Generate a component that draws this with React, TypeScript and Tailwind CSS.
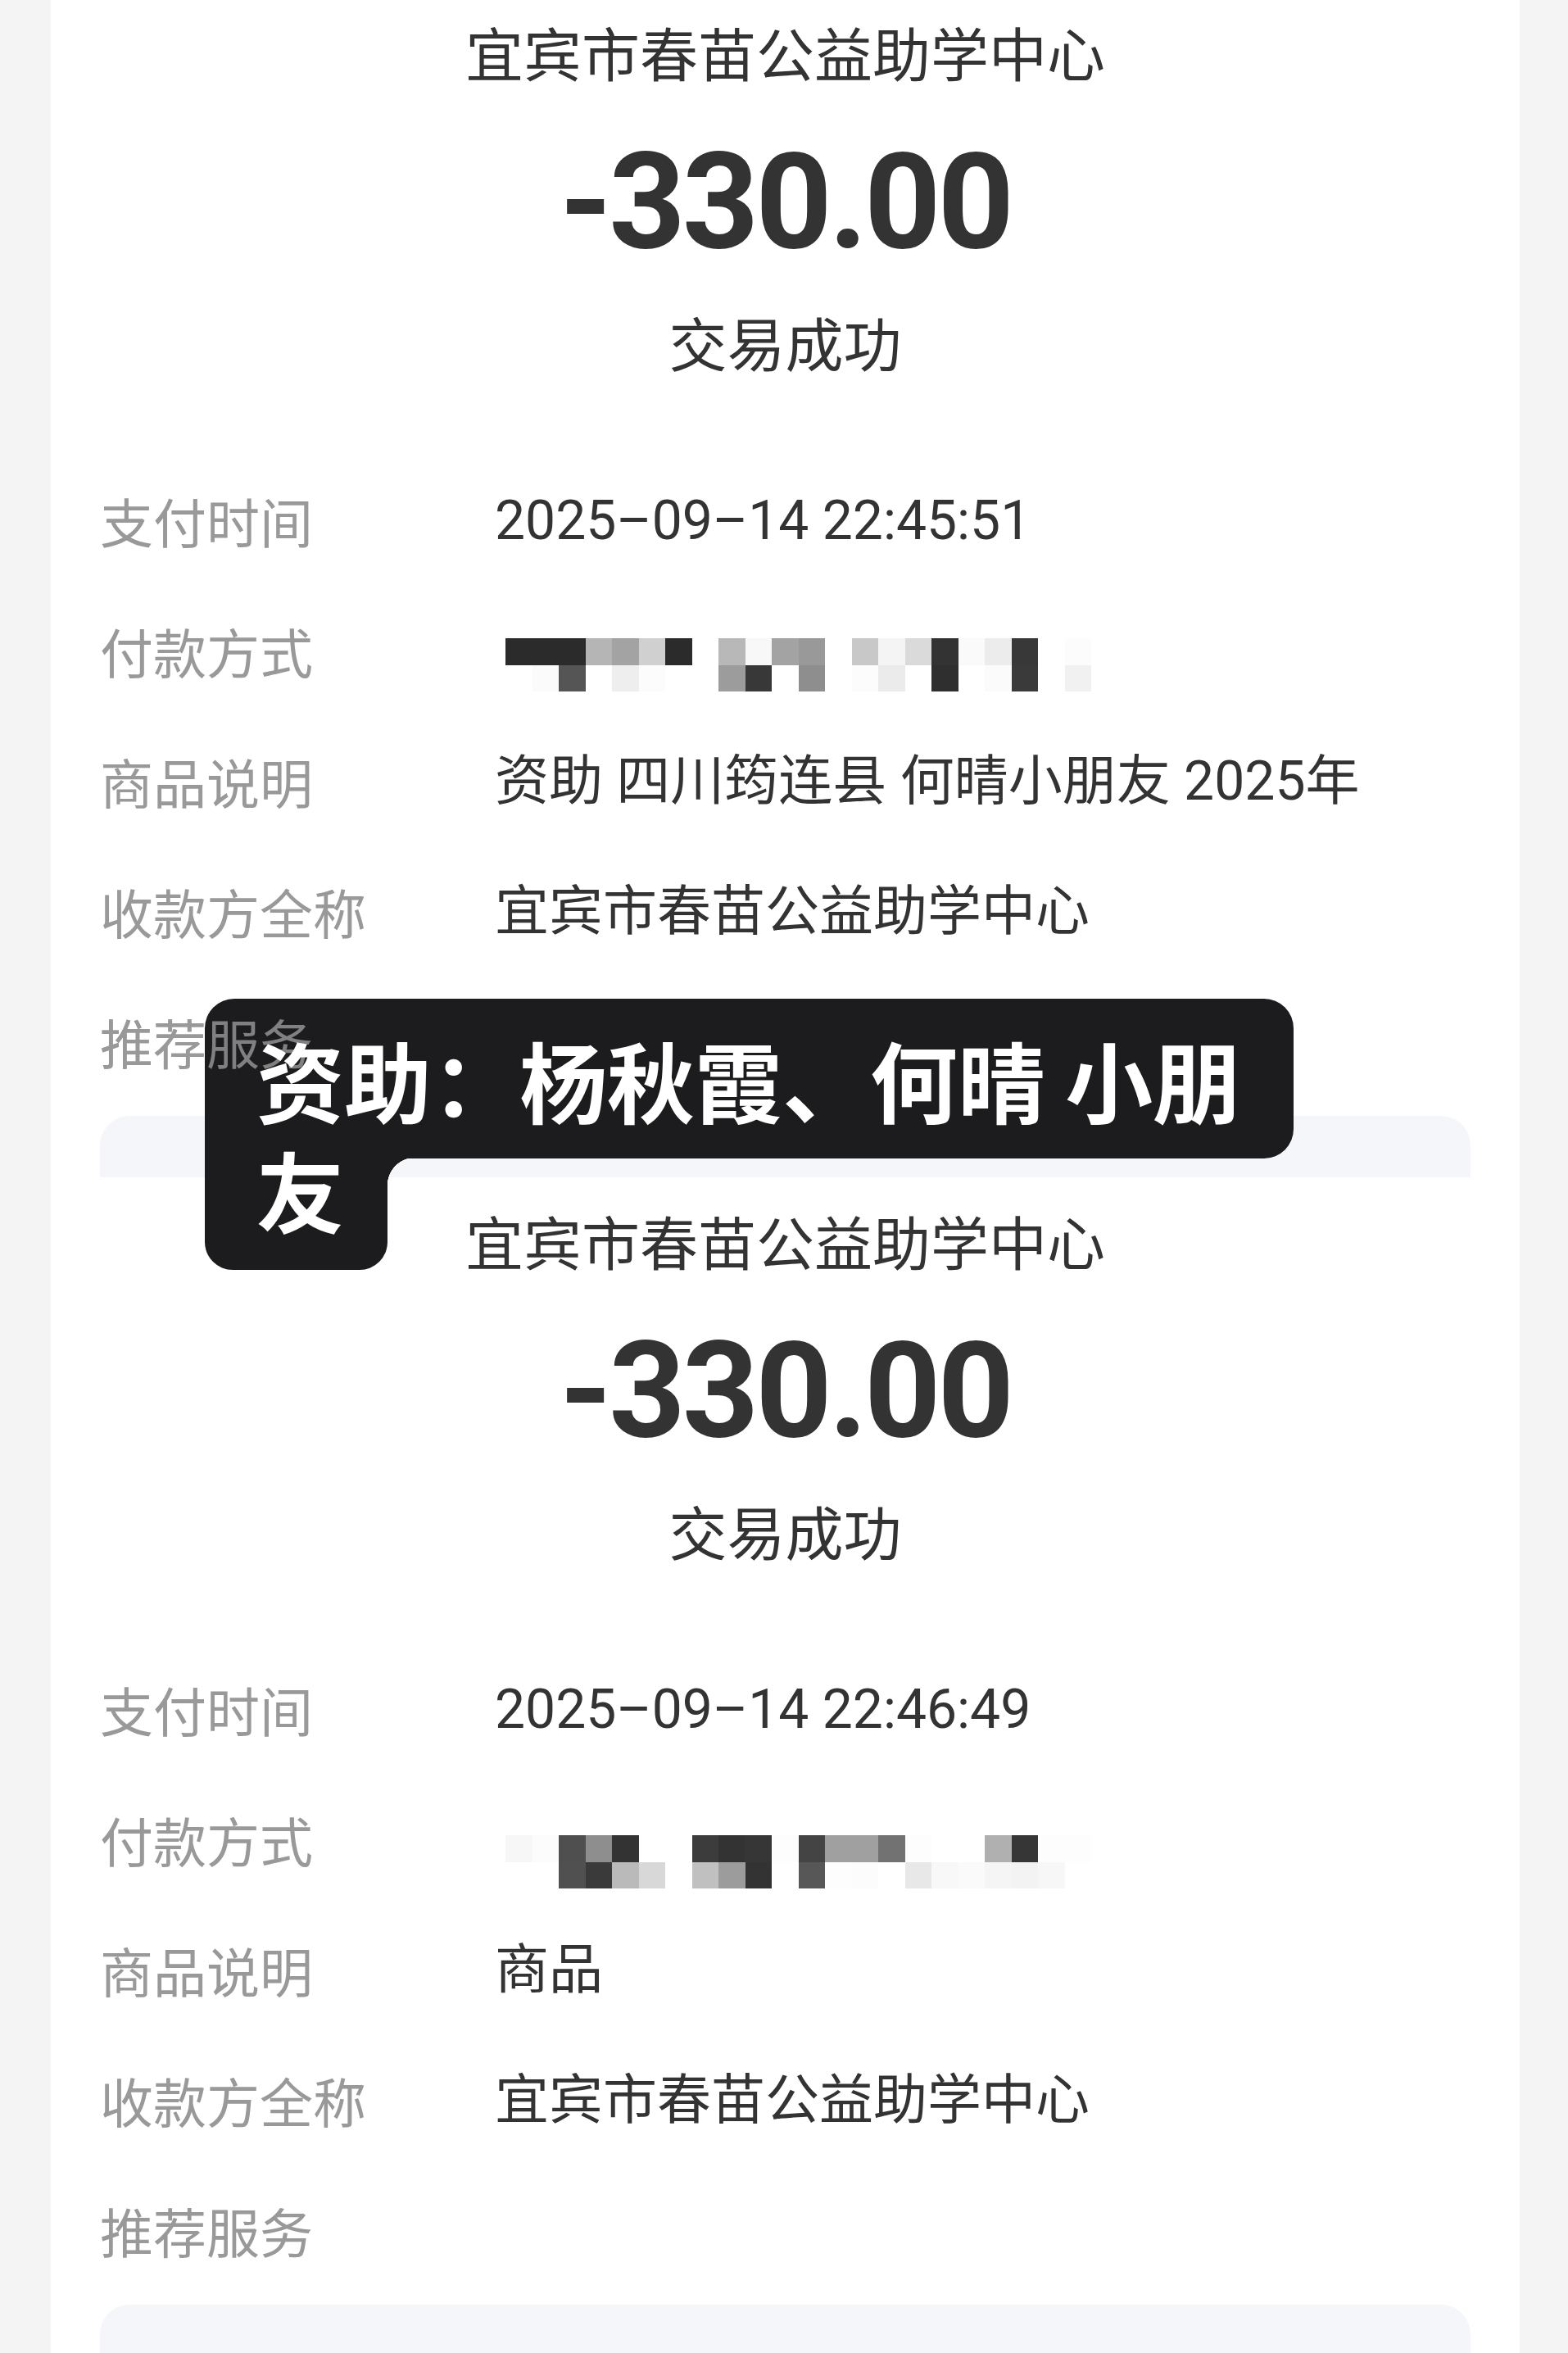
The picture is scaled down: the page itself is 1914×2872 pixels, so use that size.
import React from "react";

const M1: string[][] = [
  ["#2b2b2b","#2b2b2b","#2b2b2b","#b5b5b5","#a3a3a3","#d0d0d0","#2b2b2b","#ffffff","#b8b8b8","#f8f8f8","#a3a3a3","#999999","#ffffff","#c8c8c8","#f4f4f4","#dadada","#333333","#fafafa","#ececec","#383838","#ffffff","#fcfcfc"],
  ["#ffffff","#fbfbfb","#555555","#ffffff","#eeeeee","#fcfcfc","#ffffff","#ffffff","#9c9c9c","#383838","#ffffff","#8e8e8e","#ffffff","#fcfcfc","#ebebeb","#ffffff","#2f2f2f","#ffffff","#fbfbfb","#3a3a3a","#ffffff","#f1f1f1"],
];

const M2: string[][] = [
  ["#f7f7f7","#fcfcfc","#4f4f4f","#8e8e8e","#333333","#ffffff","#ffffff","#3c3c3c","#333333","#363636","#fdfdfd","#444444","#a0a0a0","#a0a0a0","#727272","#fdfdfd","#ffffff","#ffffff","#b0b0b0","#363636","#fdfdfd","#fdfdfd"],
  ["#ffffff","#ffffff","#505050","#3a3a3a","#bababa","#d8d8d8","#ffffff","#c0c0c0","#9c9c9c","#333333","#ffffff","#575757","#fdfdfd","#fcfcfc","#ffffff","#e8e8e8","#f8f8f8","#fafafa","#f5f5f5","#f3f3f3","#f7f7f7","#ffffff"],
];

function Mosaic({ data }: { data: string[][] }) {
  return (
    <div className="grid grid-cols-[repeat(22,32.5px)] auto-rows-[32.5px]">
      {data.flatMap((row, r) =>
        row.map((c, i) => (
          <div key={`${r}-${i}`} style={{ backgroundColor: c }} />
        ))
      )}
    </div>
  );
}

function Row({ label, children }: { label: string; children?: React.ReactNode }) {
  return (
    <div className="flex h-[159px]">
      <div className="w-[482px] flex items-center text-[65px] leading-none text-[#999999]">{label}</div>
      <div className="flex-1 flex items-center text-[66px] leading-none text-[#333333] font-['Roboto','Noto_Sans_CJK_SC',sans-serif] whitespace-nowrap">
        {children}
      </div>
    </div>
  );
}

function Receipt({
  time,
  desc,
  mosaic,
  second,
}: {
  time: string;
  desc: string;
  mosaic: string[][];
  second?: boolean;
}) {
  return (
    <div className="flex flex-col text-[#333333] font-['Noto_Sans_CJK_SC',sans-serif]">
      <div className="h-[125px] flex items-center justify-center text-[71px] leading-none">
        宜宾市春苗公益助学中心
      </div>
      <div className="h-[242px] flex items-center justify-center font-['Roboto',sans-serif] font-bold text-[163px] leading-none tracking-[-4px]">
        -330.00
      </div>
      <div className="h-[98px] flex items-center justify-center text-[71px] leading-none">
        交易成功
      </div>
      <div className="mt-[91px] flex flex-col px-[60px]">
        <Row label="支付时间">{time}</Row>
        <div className="flex h-[159px]">
          <div className="w-[482px] flex items-center text-[65px] leading-none text-[#999999]">付款方式</div>
          <div className={second ? "pt-[74px] pl-[13px]" : "pt-[64px] pl-[13px]"}>
            <Mosaic data={mosaic} />
          </div>
        </div>
        <Row label="商品说明">{desc}</Row>
        <Row label="收款方全称">宜宾市春苗公益助学中心</Row>
        <Row label="推荐服务" />
      </div>
      <div className="mt-[11px] mx-[60px] h-[420px] rounded-[36px] bg-[#f5f6f9]" />
    </div>
  );
}

export default function App() {
  return (
    <div className="relative w-[1914px] h-[2872px] bg-[#f4f4f4] overflow-hidden">
      <div className="ml-[62px] w-[1793px] h-full bg-white flex flex-col">
        <div className="h-[1437px] overflow-hidden shrink-0">
          <Receipt time="2025–09–14 22:45:51" desc="资助 四川筠连县 何晴小朋友 2025年" mosaic={M1} />
        </div>
        <div className="h-[1435px] overflow-hidden pt-[14px] shrink-0">
          <Receipt time="2025–09–14 22:46:49" desc="商品" mosaic={M2} second />
        </div>
      </div>

      {/* caption overlay */}
      <div className="absolute left-[250px] top-[1219px] w-[1329px] h-[195px] bg-[#1c1c1e] rounded-[36px] rounded-bl-none" />
      <div className="absolute left-[250px] top-[1412px] w-[223px] h-[138px] bg-[#1c1c1e] rounded-b-[34px]" />
      <div className="absolute left-[473px] top-[1413px] w-[34px] h-[34px] bg-[radial-gradient(circle_at_100%_100%,transparent_34px,#1c1c1e_34.5px)]" />
      <div className="absolute left-[122px] top-[1239px] text-[65px] leading-none text-[#999999] opacity-80 font-['Noto_Sans_CJK_SC',sans-serif] whitespace-nowrap">
        推荐服务
      </div>
      <div className="absolute left-[250px] top-[1219px] pl-[63px] pt-[31px] text-white font-bold text-[107px] leading-[134px] whitespace-nowrap font-['Noto_Sans_CJK_SC',sans-serif]">
        <div>资助：杨秋霞、何晴 小朋</div>
        <div>友</div>
      </div>
    </div>
  );
}
